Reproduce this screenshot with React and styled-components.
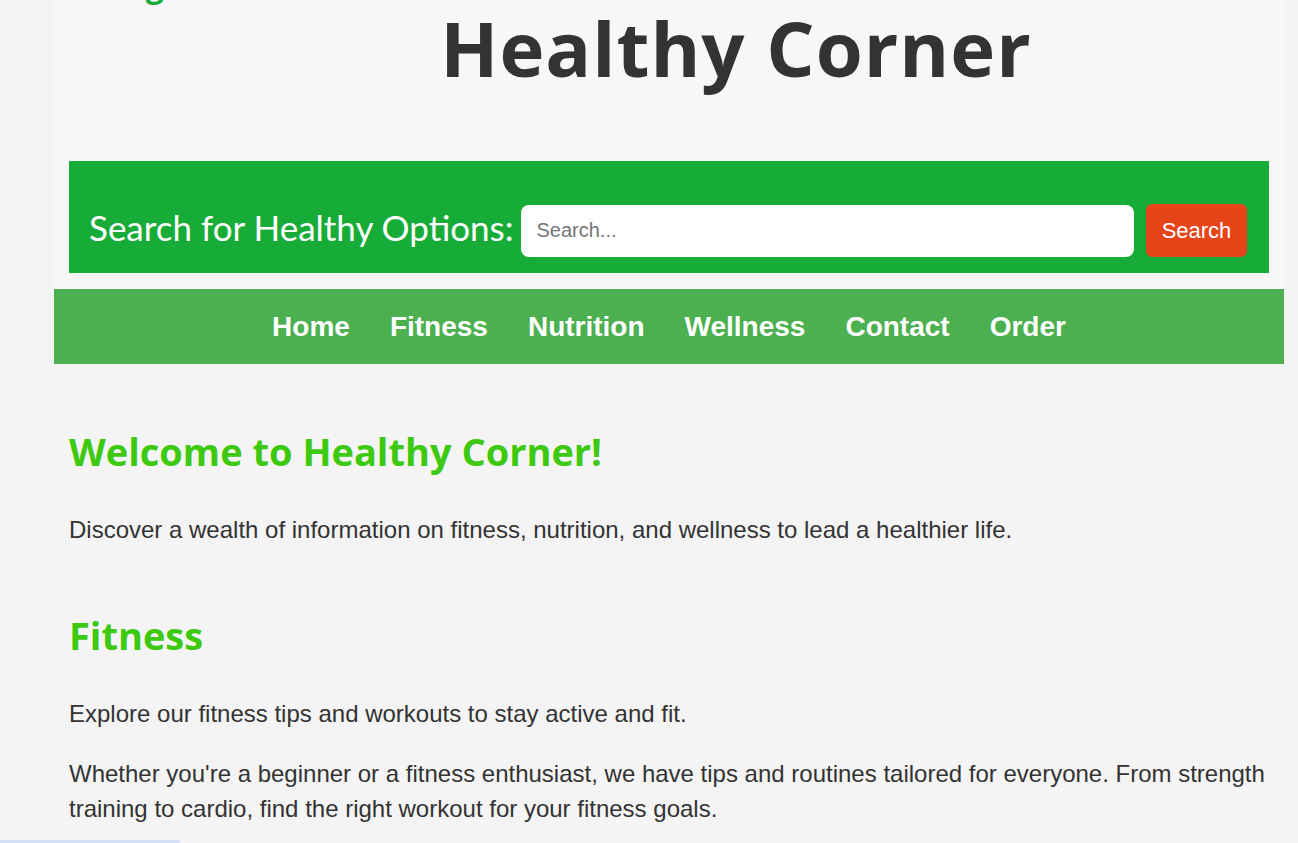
import React from 'react'
import styled, { createGlobalStyle } from 'styled-components'

const GlobalStyle = createGlobalStyle`
  body {
    margin: 0;
    background: #f4f4f4;
    font-family: "Liberation Sans", Arial, sans-serif;
    color: #333;
  }
`

const Page = styled.div`
  padding-left: 54px;
  width: 1230px;
`

const Header = styled.header`
  background: #f7f7f7;
  padding: 0 15px 16px;
  overflow: hidden;
`

const Brand = styled.div`
  margin-top: -35px;
  height: 40px;
  line-height: 40px;
  font-family: "Open Sans", sans-serif;
  font-weight: 700;
  font-size: 32px;
  color: #1aab3a;
`

const Title = styled.h1`
  margin: -3px 0 68px;
  padding-left: 134px;
  text-align: center;
  font-family: "Open Sans", sans-serif;
  font-weight: 700;
  font-size: 76px;
  line-height: 1.2;
  color: #333;
  letter-spacing: 1px;
`

const SearchBar = styled.form`
  display: flex;
  align-items: center;
  height: 112px;
  box-sizing: border-box;
  padding: 43px 22px 16px 20px;
  background: #17ac37;
`

const SearchLabel = styled.label`
  font-family: Lato, sans-serif;
  font-size: 35px;
  color: #fff;
  margin-right: 8px;
  margin-bottom: 8px;
  white-space: nowrap;
`

const SearchInput = styled.input`
  flex: 1;
  height: 52px;
  box-sizing: border-box;
  border: none;
  border-radius: 8px;
  padding: 0 15px;
  font-family: "Liberation Sans", Arial, sans-serif;
  font-size: 20px;
  color: #333;
  outline: none;
  &::placeholder { color: #757575; }
`

const SearchButton = styled.button`
  margin-left: 12px;
  width: 101px;
  height: 53px;
  border: none;
  border-radius: 6px;
  background: #e8441a;
  color: #fff;
  font-family: "Liberation Sans", Arial, sans-serif;
  font-size: 22px;
`

const Nav = styled.nav`
  display: flex;
  justify-content: center;
  align-items: center;
  gap: 40px;
  height: 75px;
  background: #4caf50;
`

const NavLink = styled.a`
  color: #fff;
  font-weight: 700;
  font-size: 28px;
  text-decoration: none;
`

const Main = styled.main`
  padding: 65px 15px 0;
`

const Section = styled.section`
  & + & { margin-top: 66px; }
`

const Heading = styled.h2`
  margin: 0 0 39px;
  font-family: "Open Sans", sans-serif;
  font-weight: 700;
  font-size: 38px;
  line-height: 44px;
  color: #3cc910;
`

const Text = styled.p`
  margin: 0 0 25px;
  font-size: 24px;
  line-height: 35px;
  color: #333;
`

const ScrollHint = styled.div`
  position: fixed;
  left: 0;
  bottom: 0;
  width: 180px;
  height: 3px;
  border-radius: 0 3px 0 0;
  background: #d3def7;
`

const links = ['Home', 'Fitness', 'Nutrition', 'Wellness', 'Contact', 'Order']

export default function App() {
  return (
    <>
      <GlobalStyle />
      <Page>
        <Header>
          <Brand>Living Well</Brand>
          <Title>Healthy Corner</Title>
          <SearchBar onSubmit={e => e.preventDefault()}>
            <SearchLabel htmlFor="q">Search for Healthy Options:</SearchLabel>
            <SearchInput id="q" type="text" placeholder="Search..." />
            <SearchButton type="submit">Search</SearchButton>
          </SearchBar>
        </Header>
        <Nav>
          {links.map(l => <NavLink key={l} href="#">{l}</NavLink>)}
        </Nav>
        <Main>
          <Section>
            <Heading>Welcome to Healthy Corner!</Heading>
            <Text>Discover a wealth of information on fitness, nutrition, and wellness to lead a healthier life.</Text>
          </Section>
          <Section>
            <Heading>Fitness</Heading>
            <Text>Explore our fitness tips and workouts to stay active and fit.</Text>
            <Text>Whether you're a beginner or a fitness enthusiast, we have tips and routines tailored for everyone. From strength training to cardio, find the right workout for your fitness goals.</Text>
          </Section>
        </Main>
      </Page>
      <ScrollHint />
    </>
  )
}
